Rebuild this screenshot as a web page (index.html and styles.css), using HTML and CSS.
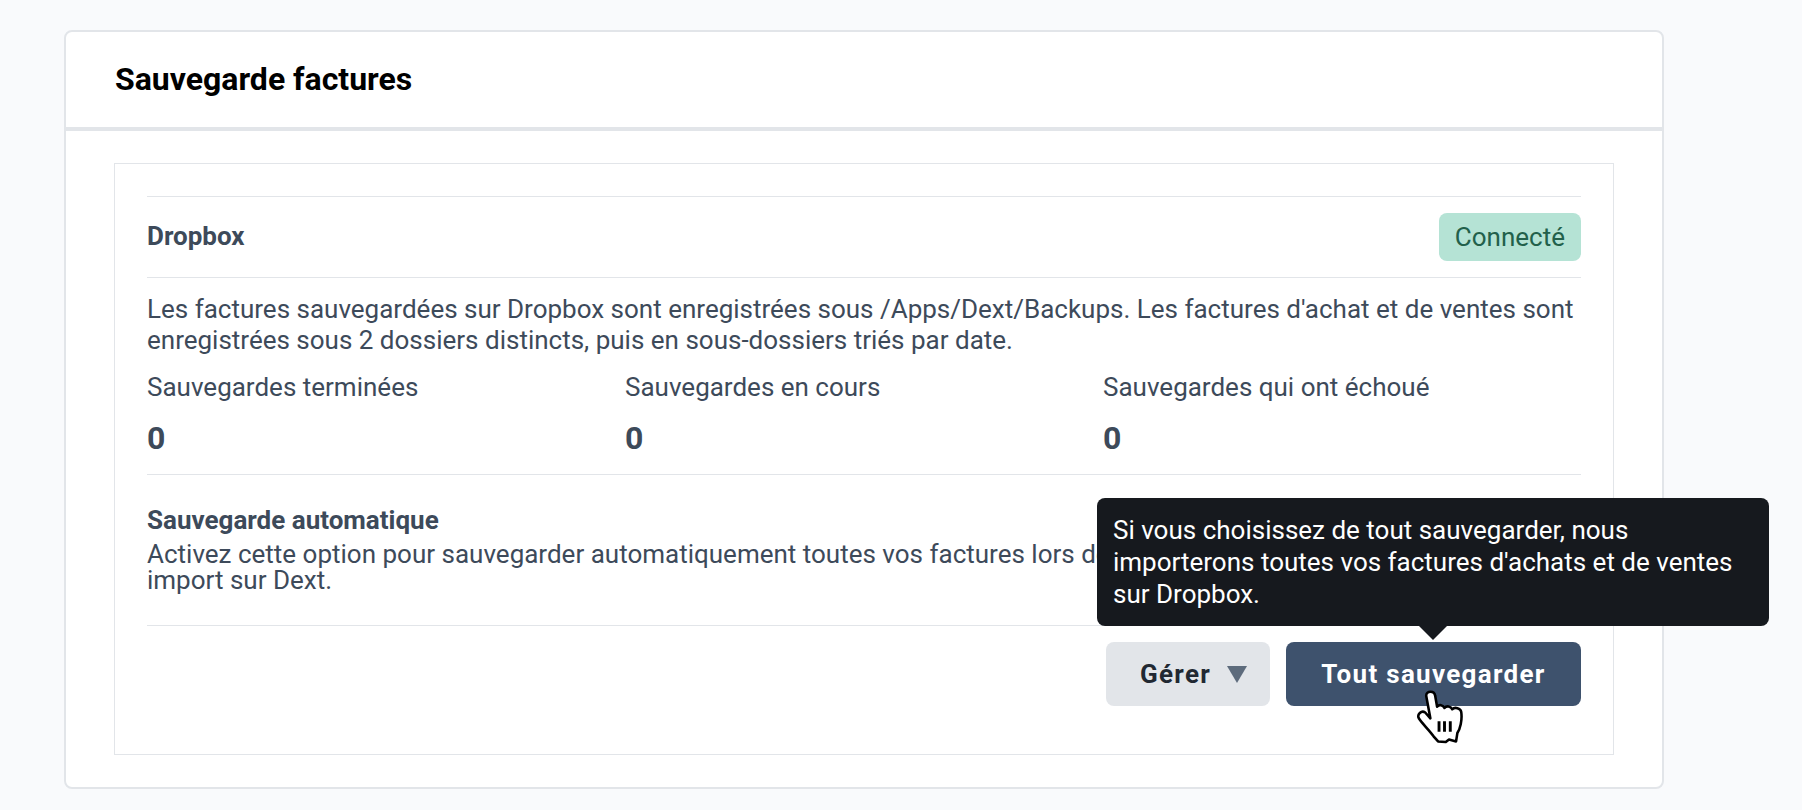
FILE: index.html
```html
<!DOCTYPE html>
<html lang="fr">
<head>
<meta charset="utf-8">
<title>Sauvegarde factures</title>
<link rel="stylesheet" href="styles.css">
</head>
<body>
<main class="card">
  <header class="card-header"><h1>Sauvegarde factures</h1></header>
  <div class="card-body">
    <section class="panel">
      <div class="row-head">
        <h2>Dropbox</h2>
        <span class="badge">Connecté</span>
      </div>
      <div class="info">
        <p>Les factures sauvegardées sur Dropbox sont enregistrées sous /Apps/Dext/Backups. Les factures d'achat et de ventes sont enregistrées sous 2 dossiers distincts, puis en sous-dossiers triés par date.</p>
        <div class="stats">
          <div><div class="stat-label">Sauvegardes terminées</div><div class="stat-value">0</div></div>
          <div><div class="stat-label">Sauvegardes en cours</div><div class="stat-value">0</div></div>
          <div><div class="stat-label">Sauvegardes qui ont échoué</div><div class="stat-value">0</div></div>
        </div>
      </div>
      <div class="auto">
        <h3>Sauvegarde automatique</h3>
        <p>Activez cette option pour sauvegarder automatiquement toutes vos factures lors de chaque import sur Dext.</p>
      </div>
      <div class="actions">
        <button class="btn btn-grey">Gérer <span class="caret"></span></button>
        <div class="tip-wrap">
          <div class="tooltip">Si vous choisissez de tout sauvegarder, nous importerons toutes vos factures d'achats et de ventes sur Dropbox.</div>
          <button class="btn btn-blue">Tout sauvegarder</button>
          <svg class="cursor" viewBox="-4 -4 148 168" aria-hidden="true">
            <path d="M27 14C27 -3 53 -3 55 14L61 48C67 40 80 42 84 52C90 44 104 46 108 56C116 48 134 52 136 64C140 90 132 118 124 130L120 156L98 150L88 158L64 156L50 140C36 120 14 100 4 84C-2 72 12 58 24 66L40 84Z" fill="#fff" stroke="#000" stroke-width="8" stroke-linejoin="round"/>
            <path d="M67 93V126M84 93V126M102 93V126" stroke="#000" stroke-width="9" fill="none"/>
          </svg>
        </div>
      </div>
    </section>
  </div>
</main>
</body>
</html>
```
FILE: styles.css
```css
* { box-sizing: border-box; }
html, body { margin: 0; height: 100%; }
body {
  background: #f9fafc;
  font-family: Roboto, "Liberation Sans", sans-serif;
  font-size: 26px;
  color: #3d4a5a;
  padding: 30px 138px 22px 64px;
  overflow: hidden;
}
h1, h2, h3, p { margin: 0; }
.card {
  background: #fff;
  border: 2px solid #e2e5e9;
  border-radius: 8px;
}
.card-header {
  height: 99px;
  padding: 0 48px 2px 49px;
  display: flex;
  align-items: center;
  border-bottom: 4px solid #e2e5e9;
}
h1 { font-size: 32px; font-weight: 700; color: #000; }
.card-body { padding: 32px 48px; }
.panel {
  border: 1px solid #e2e5e9;
  padding: 32px 32px 48px;
}
.row-head {
  display: flex;
  justify-content: space-between;
  align-items: center;
  height: 82px;
  padding: 16px 0;
  border-top: 1px solid #e2e5e9;
  border-bottom: 1px solid #e2e5e9;
}
h2, h3 { font-size: 26px; font-weight: 700; }
h2 { position: relative; top: -1px; }
.badge {
  background: #b5e3d5;
  color: #22604b;
  height: 48px;
  line-height: 48px;
  padding: 0 16px;
  border-radius: 8px;
}
.info { padding: 16px 0; border-bottom: 1px solid #e2e5e9; }
.info p { line-height: 31px; }
.stats { display: grid; grid-template-columns: repeat(3, 1fr); margin-top: 16px; }
.stat-label { line-height: 31px; }
.stat-value { font-size: 32px; font-weight: 700; line-height: 40px; margin-top: 15px; }
.auto { padding: 28px 0 32px; border-bottom: 1px solid #e2e5e9; }
.auto h3 { line-height: 34px; margin-bottom: 4px; }
.auto p { line-height: 26px; max-width: 1100px; }
.actions { display: flex; justify-content: flex-end; gap: 16px; margin-top: 16px; }
.tip-wrap { position: relative; }
.btn {
  height: 64px;
  border: 0;
  border-radius: 8px;
  font-family: inherit;
  font-size: 26px;
  font-weight: 700;
  letter-spacing: 1.3px;
  display: flex;
  align-items: center;
}
.btn-grey { width: 164px; background: #e2e5e9; color: #212832; padding: 0 0 0 34px; gap: 16px; }
.caret {
  width: 0; height: 0;
  border-left: 10px solid transparent;
  border-right: 10px solid transparent;
  border-top: 17px solid #5d6b7c;
}
.btn-blue { width: 295px; background: #3e526d; color: #fff; justify-content: center; }
.tooltip {
  position: absolute;
  right: -188px;
  bottom: 80px;
  width: 672px;
  height: 128px;
  padding: 16px;
  background: #16191e;
  color: #fff;
  line-height: 32px;
  border-radius: 8px;
}
.tooltip::after {
  content: "";
  position: absolute;
  left: 322px;
  bottom: -14px;
  border-left: 14px solid transparent;
  border-right: 14px solid transparent;
  border-top: 14px solid #16191e;
}
.cursor {
  position: absolute;
  left: 130px;
  top: 48px;
  width: 48px;
  height: 54px;
}
```
